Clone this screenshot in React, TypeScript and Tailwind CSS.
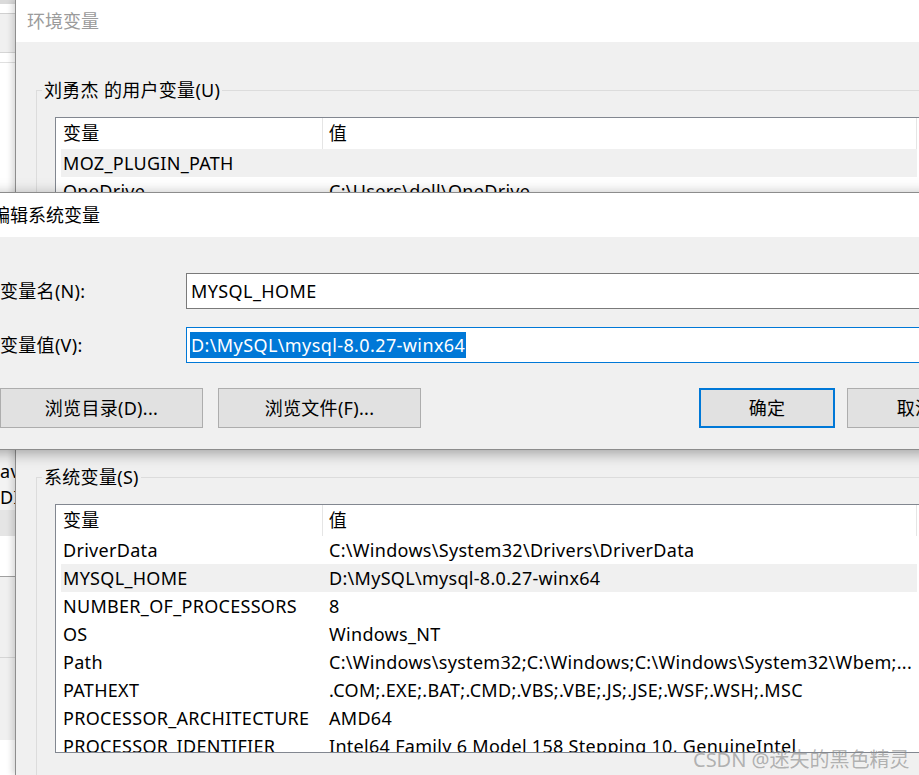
import React from "react";

type Row = { name: string; value: string; hot?: boolean };

const userVars: Row[] = [
  { name: "MOZ_PLUGIN_PATH", value: "", hot: true },
  { name: "OneDrive", value: "C:\\Users\\dell\\OneDrive" },
  { name: "Path", value: "C:\\Users\\dell\\AppData\\Local\\Microsoft\\WindowsApps;" },
  { name: "TEMP", value: "C:\\Users\\dell\\AppData\\Local\\Temp" },
  { name: "TMP", value: "C:\\Users\\dell\\AppData\\Local\\Temp" },
];

const systemVars: Row[] = [
  { name: "DriverData", value: "C:\\Windows\\System32\\Drivers\\DriverData" },
  { name: "MYSQL_HOME", value: "D:\\MySQL\\mysql-8.0.27-winx64", hot: true },
  { name: "NUMBER_OF_PROCESSORS", value: "8" },
  { name: "OS", value: "Windows_NT" },
  { name: "Path", value: "C:\\Windows\\system32;C:\\Windows;C:\\Windows\\System32\\Wbem;..." },
  { name: "PATHEXT", value: ".COM;.EXE;.BAT;.CMD;.VBS;.VBE;.JS;.JSE;.WSF;.WSH;.MSC" },
  { name: "PROCESSOR_ARCHITECTURE", value: "AMD64" },
  { name: "PROCESSOR_IDENTIFIER", value: "Intel64 Family 6 Model 158 Stepping 10, GenuineIntel" },
];

function VarList({ rows, height }: { rows: Row[]; height: string }) {
  return (
    <div className={`${height} w-[880px] overflow-hidden border border-[#828790] bg-white pl-[5px]`}>
      <div className="flex h-[31px] w-[856px]">
        <div className="flex w-[261px] items-center pl-[2px]">变量</div>
        <div className="flex w-[596px] items-center border-x border-[#e5e5e5] pl-[6px]">值</div>
      </div>
      {rows.map((r) => (
        <div
          key={r.name}
          className={`flex h-[28px] w-[856px] items-center whitespace-nowrap ${r.hot ? "bg-[#f0f0f0]" : ""}`}
        >
          <div className="w-[261px] shrink-0 pl-[2px]">{r.name}</div>
          <div className="pl-[7px]">{r.value}</div>
        </div>
      ))}
    </div>
  );
}

function GroupBox({ label, className, children }: any) {
  return (
    <div className={`relative border-l border-t border-[#dcdcdc] ${className}`}>
      <div className="absolute left-[5px] top-[-13px] bg-[#f0f0f0] px-[2px] leading-[24px] whitespace-nowrap">
        {label}
      </div>
      <div className="ml-[18px] mt-[26px]">{children}</div>
    </div>
  );
}

function BackStrip() {
  return (
    <div className="flex w-[15px] shrink-0 flex-col overflow-hidden bg-white">
      <div className="h-[4px] bg-[#dadada]" />
      <div className="h-[9px] bg-white" />
      <div className="h-[1px] bg-[#d0d0d0]" />
      <div className="h-[38px] bg-[#f0f0f0]" />
      <div className="h-[1px] bg-[#d5d5d5]" />
      <div className="h-[9px] bg-white" />
      <div className="h-[1px] bg-[#e0e0e0]" />
      <div className="h-[129px] bg-white" />
      <div className="h-[258px] bg-white" />
      <div className="h-[8px] bg-[#f3f3f3]" />
      <div className="flex h-[27px] items-center bg-[#f3f3f3] whitespace-nowrap">av</div>
      <div className="flex h-[25px] items-center bg-[#f3f3f3] whitespace-nowrap">DI</div>
      <div className="h-[26px] bg-[#e5e5e5]" />
      <div className="h-[40px] bg-white" />
      <div className="h-[1px] bg-[#a0a0a0]" />
      <div className="h-[80px] bg-[#f0f0f0]" />
      <div className="h-[1px] bg-[#d5d5d5]" />
      <div className="h-[82px] bg-[#f0f0f0]" />
      <div className="flex-1 bg-white" />
    </div>
  );
}

export default function App() {
  return (
    <div className="relative flex h-[775px] w-[919px] overflow-hidden bg-white font-['Noto_Sans','Noto_Sans_CJK_SC',sans-serif] text-[18px] tracking-[0.3px] text-black">
      <BackStrip />

      {/* 环境变量 window */}
      <div className="flex min-w-0 flex-1 flex-col border-l border-[#8e8e8e] shadow-[-3px_0_6px_rgba(0,0,0,0.15)]">
        <div className="flex h-[42px] shrink-0 items-center bg-white pl-[11px] tracking-normal text-[#9b9b9b]">环境变量</div>
        <div className="flex flex-1 flex-col bg-[#f0f0f0] pl-[20px]">
          <GroupBox label="刘勇杰 的用户变量(U)" className="mt-[48px] h-[350px] border-b">
            <VarList rows={userVars} height="h-[230px]" />
          </GroupBox>
          <GroupBox label="系统变量(S)" className="mt-[37px] flex-1">
            <VarList rows={systemVars} height="h-[249px]" />
          </GroupBox>
        </div>
      </div>

      {/* 编辑系统变量 dialog */}
      <div className="absolute left-[-18px] top-[192px] flex h-[258px] w-[1060px] flex-col border border-[#8c8c8c] bg-[#f0f0f0] shadow-[0_3px_14px_rgba(0,0,0,0.35)]">
        <div className="flex h-[44px] shrink-0 items-center bg-white pl-[9px] tracking-normal">编辑系统变量</div>
        <div className="flex flex-col pl-[17px]">
          <div className="mt-[36px] flex items-center">
            <div className="w-[186px] shrink-0">变量名(N):</div>
            <div className="flex h-[36px] flex-1 items-center border border-[#7a7a7a] bg-white pl-[4px] tracking-[0.4px]">
              MYSQL_HOME
            </div>
          </div>
          <div className="mt-[18px] flex items-center">
            <div className="w-[186px] shrink-0">变量值(V):</div>
            <div className="flex h-[36px] flex-1 items-center border border-[#0078d7] bg-white pl-[3px] tracking-[0.4px]">
              <span className="bg-[#0078d7] px-[1px] leading-[26px] text-white">D:\MySQL\mysql-8.0.27-winx64</span>
            </div>
          </div>
          <div className="mt-[25px] flex">
            <button className="flex h-[40px] w-[203px] shrink-0 items-center justify-center border border-[#adadad] bg-[#e1e1e1]">
              浏览目录(D)...
            </button>
            <button className="ml-[15px] flex h-[40px] w-[203px] shrink-0 items-center justify-center border border-[#adadad] bg-[#e1e1e1]">
              浏览文件(F)...
            </button>
            <button className="ml-[278px] flex h-[40px] w-[136px] shrink-0 items-center justify-center border-2 border-[#0078d7] bg-[#e1e1e1]">
              确定
            </button>
            <button className="ml-[12px] flex h-[40px] w-[136px] shrink-0 items-center justify-center border border-[#adadad] bg-[#e1e1e1]">
              取消
            </button>
          </div>
        </div>
      </div>

      {/* watermark */}
      <div className="absolute left-[693px] top-[745px] text-[20px] tracking-normal whitespace-nowrap text-[rgba(140,140,140,0.65)]">
        CSDN @迷失的黑色精灵
      </div>
    </div>
  );
}
